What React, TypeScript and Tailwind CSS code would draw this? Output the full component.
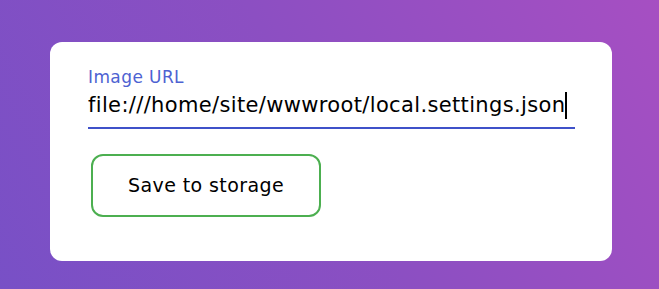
import React from "react";

const App: React.FC = () => {
  return (
    <div
      className="w-[659px] h-[289px] pt-[42px] pl-[50px] bg-[linear-gradient(60deg,#7850c6_0%,#8c4fc2_50%,#a64fc2_100%)]"
      style={{ fontFamily: "'DejaVu Sans', sans-serif" }}
    >
      <div className="w-[562px] h-[219px] bg-white rounded-[12px] pt-[24px] pl-[38px] pr-[37px]">
        <label className="flex flex-col">
          <span className="text-[17px] leading-[22px] tracking-[0.4px] text-[#4d62d2]">Image URL</span>
          <div className="flex items-center h-[41px] pb-[4px] border-b-2 border-[#3f51c9] text-[21px] text-black">
            <span className="tracking-[0.35px]">file:///home/site/wwwroot/local.settings.json</span>
            <span className="w-[2px] h-[27px] bg-black" />
          </div>
        </label>

        <button className="mt-[25px] ml-[3px] w-[230px] h-[63px] rounded-[12px] border-2 border-[#4caf50] text-[19px] tracking-[0.4px] text-black">
          Save to storage
        </button>
      </div>
    </div>
  );
};

export default App;
